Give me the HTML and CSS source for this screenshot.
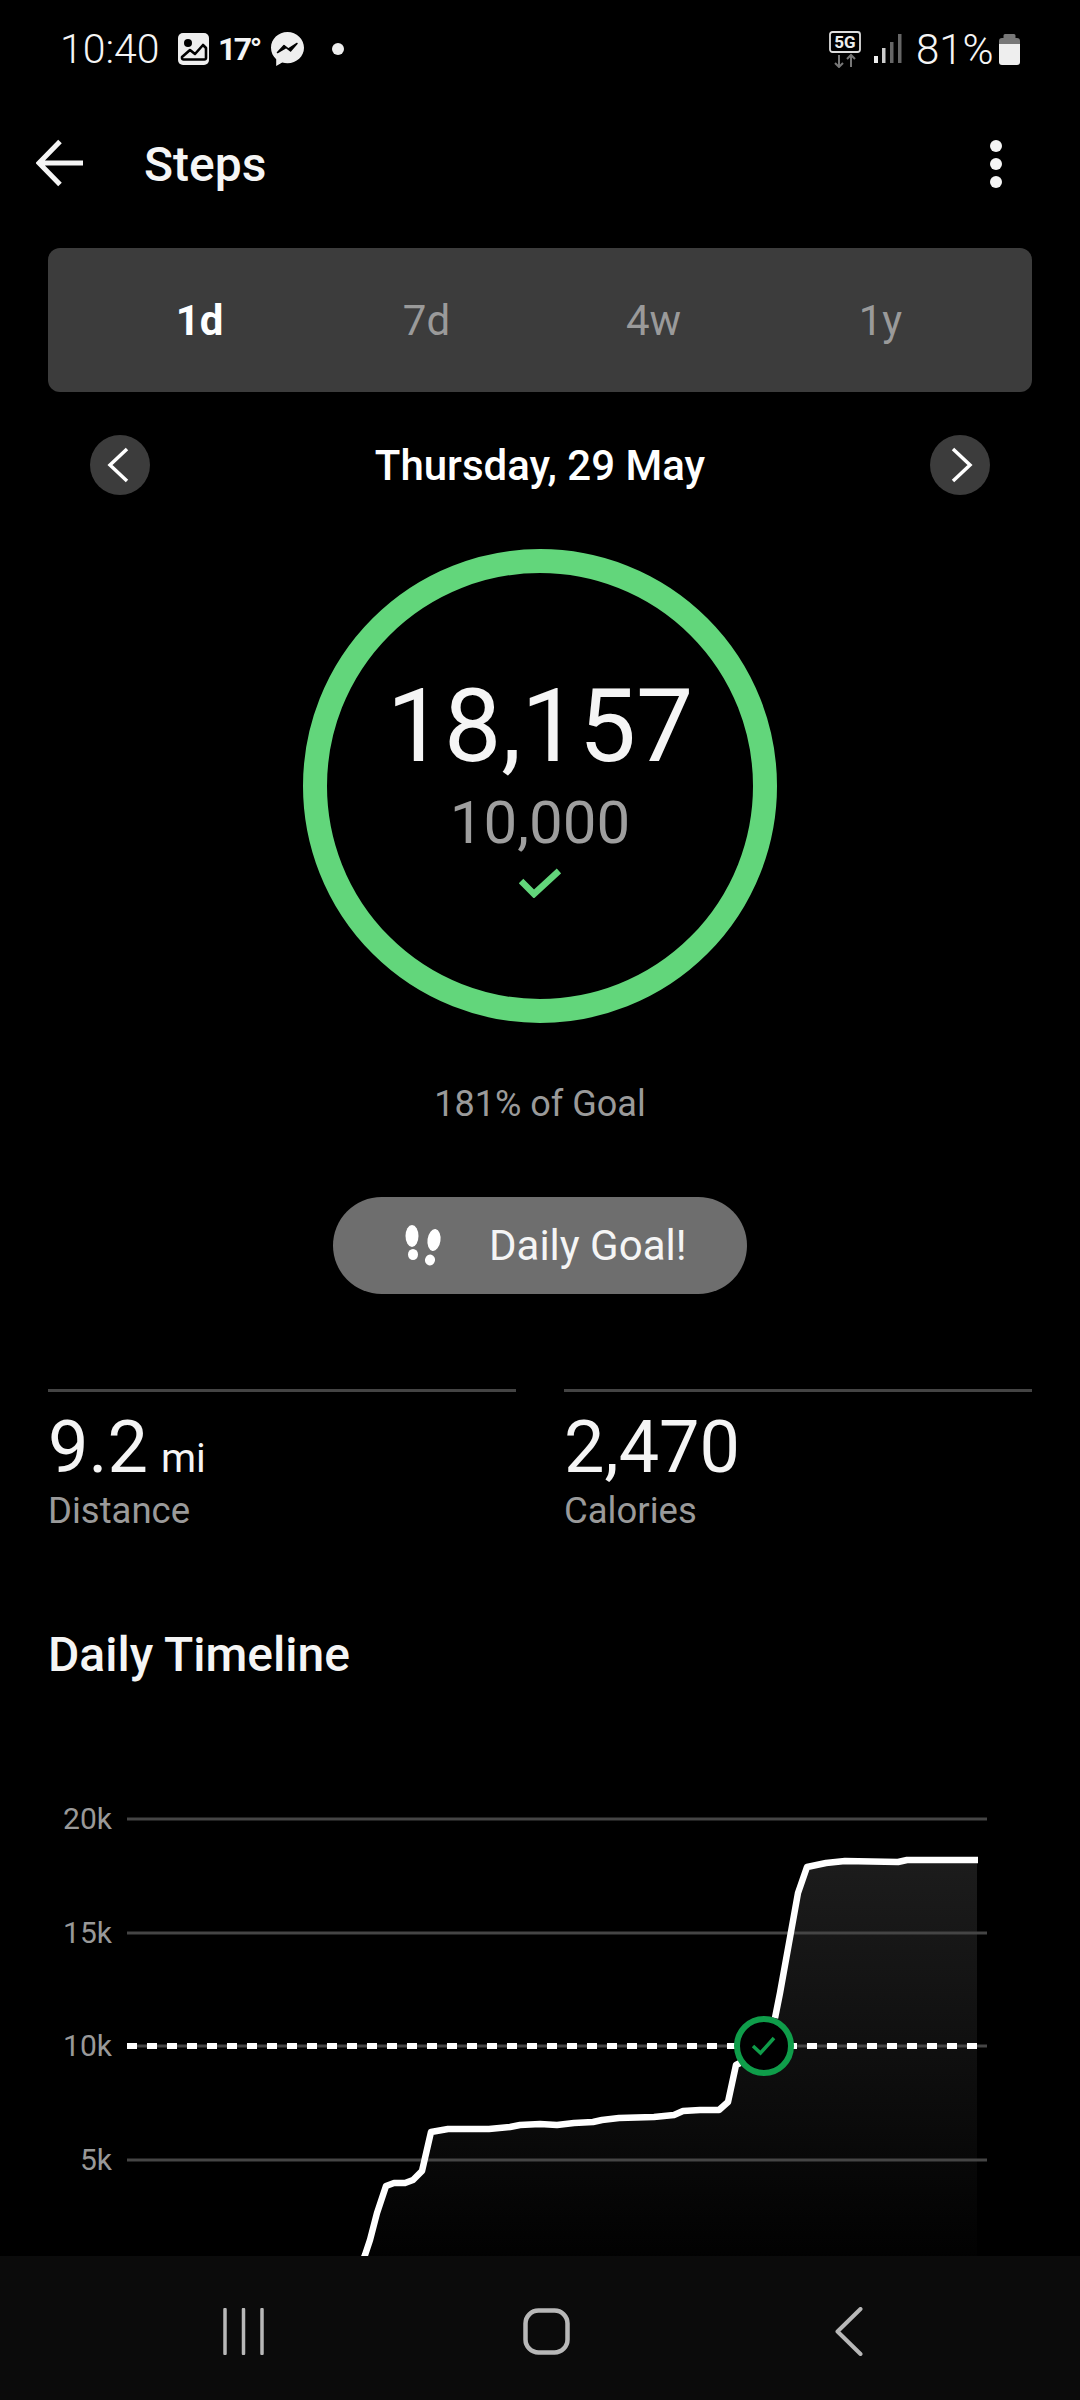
FILE: index.html
```html
<!DOCTYPE html>
<html lang="en">

<head>
    <meta charset="UTF-8">
    <meta name="viewport" content="width=device-width, initial-scale=1.0">
    <title>Steps</title>
    <link rel="stylesheet" href="styles.css">
</head>

<body>
    <main class="screen">
        <div class="status-bar">
            <div class="status-left">
                <span class="status-time">10:40</span>
                <svg class="icon-gallery" width="31" height="32" viewBox="0 0 31 32">
                    <rect width="31" height="32" rx="5" fill="#eee"/>
                    <circle cx="10" cy="10" r="4" fill="#000"/>
                    <path d="M4 24l8-7 5 4 8-9 3 3v10a1.5 1.5 0 0 1-1.5 1.5h-21a1.5 1.5 0 0 1-1.5-1.500z" fill="#eee" stroke="#000" stroke-width="2.600" stroke-linejoin="round"/>
                </svg>
                <span class="status-temp">17°</span>
                <svg class="icon-messenger" width="33" height="34" viewBox="0 0 33 34">
                    <path d="M16.500 0C7.400 0 0 6.900 0 15.800c0 4.600 2 8.600 5.200 11.400V34l6-3.400c1.700.5 3.500.7 5.300.7 9.100 0 16.500-6.900 16.500-15.500S25.600 0 16.500 0z" fill="#eee"/>
                    <path d="M6.500 20.500l6.500-7 4.500 3.500 8.500-5.500-6.500 7.500-4.500-3.500z" fill="#000" stroke="#000" stroke-width="1.500" stroke-linejoin="round"/>
                </svg>
                <span class="status-dot"></span>
            </div>
            <div class="status-right">
                <svg class="icon-network" width="33" height="37" viewBox="0 0 33 37">
                    <rect x="1" y="1" width="30" height="20" rx="2.500" fill="none" stroke="#ddd" stroke-width="1.800"/>
                    <text class="network-label" x="16" y="17" text-anchor="middle">5G</text>
                    <path d="M10 24v12M6 32l4 4 4-4" fill="none" stroke="#777" stroke-width="2"/>
                    <path d="M22 36V24M18 28l4-4 4 4" fill="none" stroke="#777" stroke-width="2"/>
                </svg>
                <svg class="icon-signal" width="28" height="30" viewBox="0 0 28 30">
                    <rect x="0" y="22" width="4" height="7" fill="#eee"/>
                    <rect x="8" y="14" width="3.500" height="15" fill="#ccc"/>
                    <rect x="16" y="8" width="3.500" height="21" fill="#666"/>
                    <rect x="24" y="0" width="3.500" height="29" fill="#666"/>
                </svg>
                <span class="status-battery-text">81%</span>
                <svg class="icon-battery" width="21" height="31" viewBox="0 0 21 31">
                    <path d="M6 0h9a1.500 1.500 0 0 1 1.500 1.500V4H18a3 3 0 0 1 3 3v3H0V7a3 3 0 0 1 3-3h1.500V1.500A1.500 1.500 0 0 1 6 0z" fill="#777"/>
                    <path d="M0 10h21v18a3 3 0 0 1-3 3H3a3 3 0 0 1-3-3z" fill="#eee"/>
                </svg>
            </div>
        </div>

        <header class="app-header">
            <svg class="icon-back" width="48" height="48" viewBox="0 0 48 48">
                <path d="M47 24H4M24 2.500L3 24l21 21.500" fill="none" stroke="#f5f5f5" stroke-width="5"/>
            </svg>
            <h1 class="page-title">Steps</h1>
            <div class="more-menu">
                <span></span><span></span><span></span>
            </div>
        </header>

        <div class="range-tabs">
            <div class="range-tab active">1d</div>
            <div class="range-tab">7d</div>
            <div class="range-tab">4w</div>
            <div class="range-tab">1y</div>
        </div>

        <div class="date-row">
            <div class="date-btn">
                <svg class="chevron-prev" width="22" height="36" viewBox="0 0 22 36"><path d="M20 2L3 18l17 16" fill="none" stroke="#fff" stroke-width="3.500"/></svg>
            </div>
            <div class="date-label">Thursday, 29 May</div>
            <div class="date-btn">
                <svg class="chevron-next" width="22" height="36" viewBox="0 0 22 36"><path d="M2 2l17 16L2 34" fill="none" stroke="#fff" stroke-width="3.500"/></svg>
            </div>
        </div>

        <div class="goal-ring">
            <div class="goal-count">18,157</div>
            <div class="goal-target">10,000</div>
            <svg class="goal-check" width="42" height="30" viewBox="0 0 42 30">
                <path d="M2 13l13 13L40 3" fill="none" stroke="#62d67b" stroke-width="6.500"/>
            </svg>
        </div>

        <p class="goal-percent">181% of Goal</p>

        <div class="goal-pill">
            <svg width="37" height="41" viewBox="0 0 37 41">
                <ellipse cx="7" cy="11" rx="6.500" ry="11" fill="#fff"/>
                <ellipse cx="8" cy="29.500" rx="5" ry="5.500" fill="#fff"/>
                <ellipse cx="29" cy="15" rx="6.500" ry="11" fill="#fff" transform="rotate(8 29 15)"/>
                <ellipse cx="25" cy="35" rx="5" ry="5.500" fill="#fff" transform="rotate(15 25 35)"/>
            </svg>
            <span>Daily Goal!</span>
        </div>

        <div class="stats">
            <div class="stat">
                <div class="stat-value">9.2<span class="stat-unit">mi</span></div>
                <div class="stat-label">Distance</div>
            </div>
            <div class="stat">
                <div class="stat-value">2,470</div>
                <div class="stat-label">Calories</div>
            </div>
        </div>

        <h2 class="section-title">Daily Timeline</h2>

        <svg class="timeline" width="1080" height="520" viewBox="0 1760 1080 520">
            <defs>
                <linearGradient id="areaFade" x1="0" y1="0" x2="0" y2="1">
                    <stop offset="0" stop-color="#1c1c1c"/>
                    <stop offset="1" stop-color="#000"/>
                </linearGradient>
            </defs>
            <path class="area" d="M363 2255L370 2245 377 2213 386 2186 394 2183 405 2183 413 2180 422 2171 431 2132 448 2129 489 2129 510 2127 520 2125 540 2124 557 2125 574 2123 593 2122 602 2120 619 2118 654 2117 674 2115 683 2111 700 2110 719 2110 728 2102 736 2065 740 2063 764 2046 775 2018 780 1993 789 1943 798 1893 807 1867 826 1863 845 1861 898 1862 907 1860 977 1860V2280H363z"/>

            <line class="grid" x1="127" y1="1819" x2="987" y2="1819"/>
            <line class="grid" x1="127" y1="1933" x2="987" y2="1933"/>
            <line class="grid" x1="127" y1="2046" x2="987" y2="2046"/>
            <line class="grid" x1="127" y1="2160" x2="987" y2="2160"/>

            <text class="axis-label" x="112" y="1829">20k</text>
            <text class="axis-label" x="112" y="1943">15k</text>
            <text class="axis-label" x="112" y="2056">10k</text>
            <text class="axis-label" x="112" y="2170">5k</text>

            <line class="goal-line" x1="127" y1="2046" x2="979" y2="2046"/>
            <path class="curve" d="M359 2270L365 2255 370 2240 377 2213 386 2186 394 2183 405 2183 413 2180 422 2171 431 2132 448 2129 489 2129 510 2127 520 2125 540 2124 557 2125 574 2123 593 2122 602 2120 619 2118 654 2117 674 2115 683 2111 700 2110 719 2110 728 2102 736 2065 740 2063M775 2018L780 1993 789 1943 798 1893 807 1867 826 1863 845 1861 898 1862 907 1860 978 1860"/>

            <circle class="goal-marker" cx="764" cy="2046" r="27"/>
            <path class="goal-marker-check" d="M753 2046l7.500 7 13.500-15"/>
        </svg>
    </main>

    <nav class="nav-bar">
        <svg width="41" height="47" viewBox="0 0 41 47">
            <path d="M2 1.500v44M20.500 1.500v44M39 1.500v44" stroke="#b8b8b8" stroke-width="3.500" stroke-linecap="round"/>
        </svg>
        <svg width="47" height="47" viewBox="0 0 47 47">
            <rect x="2.500" y="2.500" width="42" height="42" rx="13" fill="none" stroke="#b8b8b8" stroke-width="4.500"/>
        </svg>
        <svg class="nav-back" width="28" height="49" viewBox="0 0 28 49">
            <path d="M25.500 2L2.500 24.500l23 22.500" fill="none" stroke="#b8b8b8" stroke-width="4" stroke-linecap="round" stroke-linejoin="round"/>
        </svg>
    </nav>
</body>

</html>
```
FILE: styles.css
```css
* {
    box-sizing: border-box;
}

html, body {
    margin: 0;
    padding: 0;
}

body {
    width: 1080px;
    height: 2400px;
    overflow: hidden;
    display: flex;
    flex-direction: column;
    background-color: #000;
    color: #f5f5f5;
    font-family: Roboto, "Noto Sans", sans-serif;
}

.screen {
    flex: 1;
    min-height: 0;
    overflow: hidden;
    display: flex;
    flex-direction: column;
    align-items: center;
}

/* status bar */
.status-bar {
    width: 100%;
    height: 98px;
    flex-shrink: 0;
    display: flex;
    justify-content: space-between;
    align-items: center;
    padding: 0 60px;
}

.status-left, .status-right {
    display: flex;
    align-items: center;
}

.status-time {
    font-size: 41px;
    font-weight: 300;
    width: 118px;
}

.status-temp {
    font-size: 32px;
    font-weight: 700;
    letter-spacing: -2.500px;
    margin-left: 9px;
    width: 53px;
}

.status-dot {
    width: 12px;
    height: 12px;
    border-radius: 50%;
    background-color: #eee;
    margin-left: 28px;
}

.network-label {
    font-size: 17px;
    font-weight: 700;
    fill: #eee;
}

.icon-signal {
    margin-left: 12px;
}

.status-battery-text {
    font-size: 42px;
    font-weight: 300;
    margin-left: 14px;
    width: 83px;
}

/* header */
.app-header {
    width: 100%;
    height: 130px;
    flex-shrink: 0;
    display: flex;
    align-items: center;
    padding: 0 78px 0 36px;
}

.page-title {
    flex: 1;
    margin: 2px 0 0 60px;
    font-size: 48px;
    font-weight: 500;
}

.more-menu {
    display: flex;
    flex-direction: column;
    gap: 6px;
    margin-top: 2px;
}

.more-menu span {
    width: 12px;
    height: 12px;
    border-radius: 50%;
    background-color: #f5f5f5;
}

/* range tabs */
.range-tabs {
    width: 984px;
    height: 144px;
    flex-shrink: 0;
    margin-top: 20px;
    padding: 0 38px;
    display: flex;
    align-items: center;
    background-color: #3c3c3c;
    border-radius: 12px;
}

.range-tab {
    flex: 1;
    text-align: center;
    font-size: 42px;
    color: #9a9a9a;
}

.range-tab.active {
    color: #fff;
    font-weight: 700;
}

/* date */
.date-row {
    width: 900px;
    height: 60px;
    flex-shrink: 0;
    margin-top: 43px;
    display: flex;
    justify-content: space-between;
    align-items: center;
}

.date-btn {
    width: 60px;
    height: 60px;
    border-radius: 50%;
    background-color: #3c3c3c;
    display: flex;
    justify-content: center;
    align-items: center;
}

.chevron-prev {
    margin-right: 5px;
}

.chevron-next {
    margin-left: 4px;
}

.date-label {
    font-size: 42px;
    font-weight: 500;
    color: #fff;
}

/* goal ring */
.goal-ring {
    width: 474px;
    height: 474px;
    flex-shrink: 0;
    margin-top: 54px;
    border: 24px solid #62d67b;
    border-radius: 50%;
    display: flex;
    flex-direction: column;
    align-items: center;
    padding-top: 93px;
}

.goal-count {
    font-size: 102px;
    line-height: 120px;
}

.goal-target {
    font-size: 60px;
    line-height: 70px;
    color: #9e9e9e;
    margin-top: 2px;
}

.goal-check {
    margin-top: 10px;
}

.goal-percent {
    margin: 61px 0 0;
    font-size: 36px;
    line-height: 40px;
    color: #9a9a9a;
}

.goal-pill {
    width: 414px;
    height: 97px;
    flex-shrink: 0;
    margin-top: 73px;
    padding-left: 72px;
    display: flex;
    align-items: center;
    gap: 47px;
    background-color: #6e6e6e;
    border-radius: 49px;
    font-size: 42px;
    color: #f5f5f5;
}

/* stats */
.stats {
    width: 984px;
    flex-shrink: 0;
    margin-top: 95px;
    display: flex;
    gap: 48px;
}

.stat {
    flex: 1;
    border-top: 3px solid #444;
}

.stat-value {
    font-size: 72px;
    line-height: 84px;
    height: 84px;
    margin-top: 14px;
}

.stat-unit {
    font-size: 40px;
    line-height: 1;
    margin-left: 13px;
}

.stat-label {
    font-size: 36.500px;
    line-height: 42px;
    color: #9a9a9a;
}

.section-title {
    width: 984px;
    flex-shrink: 0;
    margin: 97px 0 0;
    font-size: 48px;
    line-height: 52px;
    font-weight: 500;
}

/* chart */
.timeline {
    flex-shrink: 0;
    display: block;
    margin-top: 79px;
}

.area {
    fill: url(#areaFade);
}

.grid {
    stroke: #454545;
    stroke-width: 3;
}

.axis-label {
    font-size: 30px;
    fill: #999;
    text-anchor: end;
}

.goal-line {
    stroke: #fff;
    stroke-width: 6;
    stroke-dasharray: 10 10;
}

.curve {
    fill: none;
    stroke: #fff;
    stroke-width: 6.500;
    stroke-linejoin: round;
}

.goal-marker {
    fill: #000;
    stroke: #0f9d4a;
    stroke-width: 6;
}

.goal-marker-check {
    fill: none;
    stroke: #0f9d4a;
    stroke-width: 3.500;
}

/* android nav bar */
.nav-bar {
    height: 144px;
    flex-shrink: 0;
    display: flex;
    align-items: center;
    padding: 7px 0 0 223px;
    gap: 259px;
    background-color: #0b0b0b;
}

.nav-back {
    margin-left: 6px;
}
```
